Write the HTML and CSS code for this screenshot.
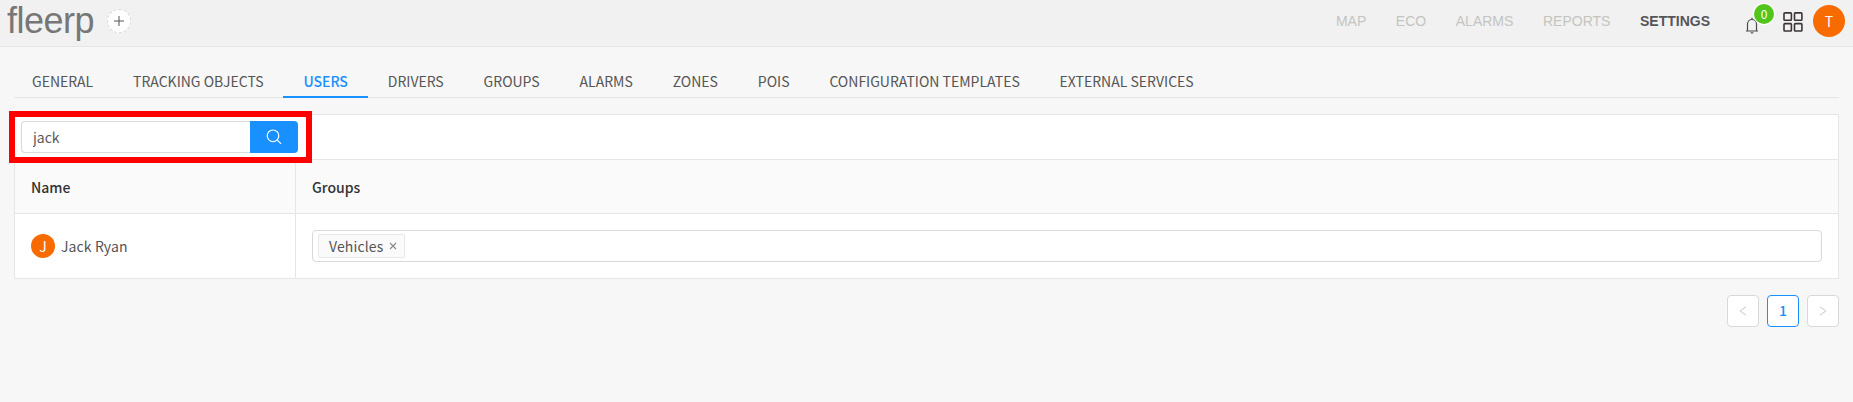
FILE: index.html
```html
<!DOCTYPE html>
<html lang="en">
<head>
<meta charset="utf-8">
<title>fleerp</title>
<link rel="stylesheet" href="styles.css">
</head>
<body>
<header class="topbar">
  <div class="logo">fleerp</div>
  <button class="add" aria-label="Add"><svg width="12" height="12" viewBox="0 0 12 12"><path d="M6 1v10M1 6h10" stroke="#555" fill="none"/></svg></button>
  <nav class="nav">
    <a>MAP</a><a>ECO</a><a>ALARMS</a><a>REPORTS</a><a class="current">SETTINGS</a>
  </nav>
  <div class="bell">
    <svg width="14" height="18" viewBox="0 0 14 18" fill="none" stroke="#4a4a4f" stroke-width="1.2"><path d="M7 .8v1.6M2.5 14V7a4.5 4.5 0 0 1 9 0v7M1 14h12"/><path d="M5.5 15.2a1.5 1.3 0 0 0 3 0z" fill="#4a4a4f" stroke="none"/></svg>
    <span class="badge">0</span>
  </div>
  <svg class="apps" width="20" height="20" viewBox="0 0 20 20" fill="none" stroke="#3c3439" stroke-width="1.6"><rect x="1" y=".9" width="7.4" height="7.4" rx=".8"/><rect x="11.5" y=".9" width="7.4" height="7.4" rx=".8"/><rect x="1" y="11.6" width="7.4" height="7.4" rx=".8"/><rect x="11.5" y="11.6" width="7.4" height="7.4" rx=".8"/></svg>
  <div class="avatar large">T</div>
</header>
<main class="page">
  <nav class="tabs">
    <a>GENERAL</a><a>TRACKING OBJECTS</a><a class="active">USERS</a><a>DRIVERS</a><a>GROUPS</a><a>ALARMS</a><a>ZONES</a><a>POIS</a><a>CONFIGURATION TEMPLATES</a><a>EXTERNAL SERVICES</a>
  </nav>
  <section class="table">
    <div class="toolbar">
      <div class="search">
        <input class="field" type="text" value="jack">
        <button class="go" aria-label="Search"><svg width="16" height="16" viewBox="0 0 16 16" fill="none" stroke="#fff" stroke-width="1.2"><circle cx="7" cy="6.8" r="5.8"/><path d="M11.1 10.9l4 4"/></svg></button>
      </div>
      <div class="highlight"></div>
    </div>
    <div class="row head"><div class="cell">Name</div><div class="cell">Groups</div></div>
    <div class="row body">
      <div class="cell"><span class="avatar small">J</span><span class="person">Jack Ryan</span></div>
      <div class="cell"><div class="select"><span class="tag">Vehicles<svg width="8" height="8" viewBox="0 0 8 8"><path d="M1 1l6 6M7 1L1 7" stroke="#888" stroke-width="1.1"/></svg></span></div></div>
    </div>
  </section>
  <div class="pages">
    <span class="pg"><svg width="8" height="10" viewBox="0 0 8 10"><path d="M7 .8L1.2 5 7 9.2" fill="none" stroke="#c4c4c0"/></svg></span>
    <span class="pg on">1</span>
    <span class="pg"><svg width="8" height="10" viewBox="0 0 8 10"><path d="M1 .8L6.8 5 1 9.2" fill="none" stroke="#c4c4c0"/></svg></span>
  </div>
</main>
</body>
</html>
```
FILE: styles.css
```css
* { box-sizing: border-box; }
body { margin: 0; height: 402px; overflow: hidden; background: #f7f7f7; color: #555; font: 14px/22px "Noto Sans CJK SC", sans-serif; }
button { padding: 0; border: 0; }
svg { display: block; flex: none; }
.topbar { display: flex; align-items: flex-start; height: 47px; padding: 0 8px 0 7px; background: #f1f1f1; border-bottom: 1px solid #e6e6e6; font-family: "Liberation Sans", sans-serif; }
.logo { width: 100px; font-size: 36px; line-height: 42px; letter-spacing: -0.5px; color: #777; }
.add { display: grid; place-items: center; width: 24px; height: 24px; margin-top: 9px; border: 1px dashed #d9d9d9; border-radius: 50%; background: #fff; }
.nav { display: flex; gap: 29.6px; margin-left: auto; font-size: 14px; line-height: 42px; color: #c4c4c0; }
.current { color: #55555a; font-weight: bold; }
.bell { position: relative; width: 30px; margin: 17px 8px 0 35px; }
.badge { position: absolute; left: 9px; top: -13px; width: 20px; height: 20px; border-radius: 50%; background: #52c41a; box-shadow: 0 0 0 1px #fff; color: #fff; font: 12px/20px "Noto Sans CJK SC", sans-serif; text-align: center; }
.apps { margin: 12px 10px 0 0; }
.avatar { border-radius: 50%; background: #f76b00; color: #fff; text-align: center; flex: none; }
.large { width: 32px; height: 32px; margin-top: 5px; font: 14px/32px "Noto Sans CJK SC", sans-serif; }
.page { padding: 20px 14px 0; }
.tabs { display: flex; height: 31px; border-bottom: 1px solid #e6e6e6; }
.tabs a { height: 31px; padding: 3px 19.95px 0; }
.tabs a:first-child { padding-left: 18px; }
.tabs .active { color: #1890ff; border-bottom: 2px solid #1890ff; font-weight: 500; }
.table { margin-top: 16px; border: 1px solid #e6e6e6; background: #fff; }
.toolbar { position: relative; height: 45px; padding: 6px; border-bottom: 1px solid #e6e6e6; }
.search { display: flex; width: 277px; height: 32px; }
.field { width: 229px; padding: 0 11px 1px; border: 1px solid #d9d9d9; border-right: 0; border-radius: 4px 0 0 4px; color: #595959; font: inherit; outline: 0; }
.go { display: grid; place-items: center; width: 48px; border-radius: 0 4px 4px 0; background: #1890ff; }
.highlight { position: absolute; left: -6px; top: -4px; width: 303px; height: 52px; border: 6px solid #f00; z-index: 1; }
.row { display: grid; grid-template-columns: 281px 1fr; }
.cell { display: flex; align-items: center; padding: 0 16px; }
.cell:first-child { border-right: 1px solid #e6e6e6; }
.head { height: 54px; background: #fafafa; border-bottom: 1px solid #e6e6e6; color: #333; font-weight: 500; }
.head .cell { padding-top: 1px; }
.body { height: 64px; }
.small { width: 24px; height: 24px; margin-right: 6px; line-height: 24px; }
.person { letter-spacing: 0.1px; }
.select { display: flex; align-items: center; width: 100%; height: 32px; padding: 0 5px; border: 1px solid #d9d9d9; border-radius: 4px; }
.tag { display: flex; align-items: center; gap: 6px; height: 24px; padding: 0 7px 0 10px; border: 1px solid #e8e8e8; border-radius: 2px; background: #fafafa; letter-spacing: 0.12px; }
.pages { display: flex; justify-content: flex-end; gap: 8px; margin-top: 16px; }
.pg { display: grid; place-items: center; width: 32px; height: 32px; border: 1px solid #d9d9d9; border-radius: 4px; background: #fff; }
.on { padding-bottom: 2px; border-color: #1890ff; color: #1890ff; font-weight: 500; }
```
